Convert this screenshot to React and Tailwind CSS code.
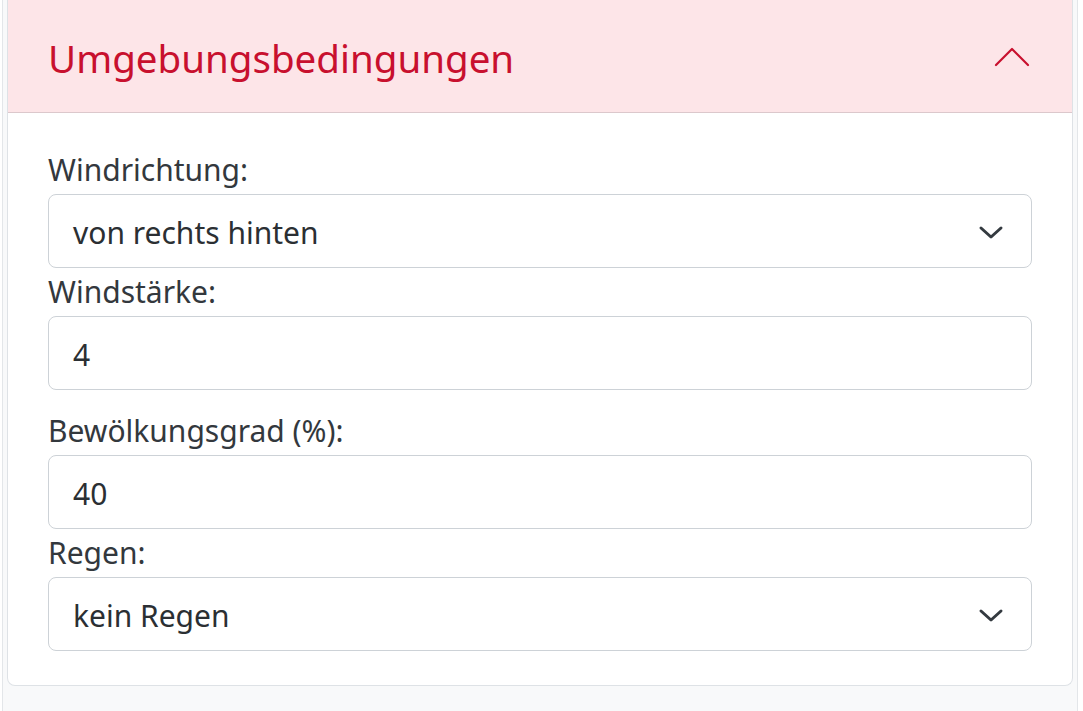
import React from "react";

function Chevron() {
  return (
    <svg width="32" height="24" viewBox="0 0 32 24" fill="none" className="shrink-0">
      <path d="M6 9 L16 18 L26 9" stroke="#343a40" strokeWidth="3" strokeLinecap="round" strokeLinejoin="round" />
    </svg>
  );
}

function Label({ children }) {
  return <div className="h-[48px] text-[30px] leading-[48px] text-[#33383d]">{children}</div>;
}

function Field({ children, select }) {
  return (
    <div className="h-[74px] border-[1.5px] border-[#cdd2d7] rounded-[8px] bg-white flex items-center pl-[24px] pr-[24px] text-[30px] text-[#2b2f33]">
      <span className="flex-1 pt-[2px]">{children}</span>
      {select && <Chevron />}
    </div>
  );
}

export default function App() {
  return (
    <div className="h-[711px] bg-white flex pl-[2px] pr-[5px]" style={{ fontFamily: '"Noto Sans", sans-serif' }}>
      <div className="flex-1 bg-[#f8f9fa] border-l border-r border-[#e3e6e9] px-[4px]">
        <div className="bg-white border border-t-0 border-[#dee2e6] rounded-b-[8px]">
          <div className="h-[113px] bg-[#fde5e8] border-b-[1.5px] border-[#dcc8cc] flex items-center justify-between pl-[40px] pr-[40px]">
            <span className="text-[38.5px] text-[#c8102e] leading-[48px] pt-[4px]">Umgebungsbedingungen</span>
            <svg width="40" height="40" viewBox="0 0 40 40" fill="none" className="mt-[2px]">
              <path d="M4 28 L20 12 L36 28" stroke="#c8102e" strokeWidth="2.2" strokeLinecap="round" strokeLinejoin="round" />
            </svg>
          </div>
          <div className="px-[40px] pt-[33px] pb-[34px] flex flex-col">
            <Label>Windrichtung:</Label>
            <Field select>von rechts hinten</Field>
            <Label>Windstärke:</Label>
            <Field>4</Field>
            <div className="h-[17px]" />
            <Label>Bewölkungsgrad (%):</Label>
            <Field>40</Field>
            <Label>Regen:</Label>
            <Field select>kein Regen</Field>
          </div>
        </div>
      </div>
    </div>
  );
}
